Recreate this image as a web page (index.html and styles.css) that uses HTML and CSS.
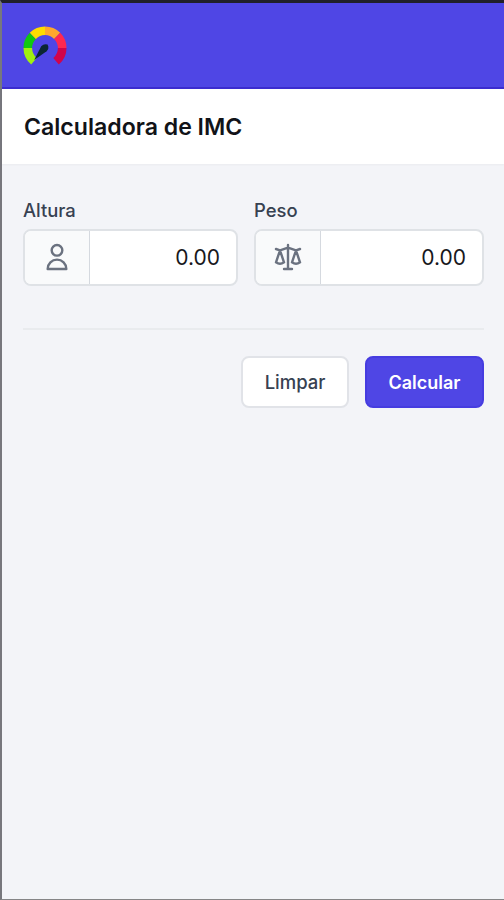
FILE: index.html
```html
<!DOCTYPE html>
<html lang="pt-BR">
<head>
    <meta charset="UTF-8">
    <meta name="viewport" content="width=device-width, initial-scale=1.0">
    <title>Calculadora de IMC</title>
    <link rel="stylesheet" href="styles.css">
</head>
<body>
    <div class="app">
        <nav class="navbar">
            <svg class="logo" viewBox="0 0 44 44" fill="none" stroke-width="8.6">
                <path stroke="#a0f010" d="M10.94 35.18A17.2 17.2 0 0 1 4.8 22"/>
                <path stroke="#10c810" d="M4.8 22A17.2 17.2 0 0 1 9.84 9.84"/>
                <path stroke="#ffdc00" d="M9.84 9.84A17.2 17.2 0 0 1 22 4.8"/>
                <path stroke="#ffa82c" d="M22 4.8A17.2 17.2 0 0 1 34.16 9.84"/>
                <path stroke="#ff2850" d="M34.16 9.84A17.2 17.2 0 0 1 39.2 22"/>
                <path stroke="#d0044c" d="M39.2 22A17.2 17.2 0 0 1 33.06 35.18"/>
                <path fill="#0b2633" d="M11.2 34L18.2 20.3Q20.8 17.4 24.6 18.6Q26.6 22.6 23.6 25.2Z"/>
            </svg>
        </nav>
        <header class="header">
            <h1>Calculadora de IMC</h1>
        </header>
        <main class="content">
            <form>
                <div class="fields">
                    <div class="field">
                        <label for="altura">Altura</label>
                        <div class="group">
                            <span class="addon">
                                <svg class="icon" viewBox="0 0 24 24">
                                    <path d="M16 7a4 4 0 11-8 0 4 4 0 018 0zM12 14a7 7 0 00-7 7h14a7 7 0 00-7-7z"/>
                                </svg>
                            </span>
                            <input type="text" id="altura" placeholder="0.00">
                        </div>
                    </div>
                    <div class="field">
                        <label for="peso">Peso</label>
                        <div class="group">
                            <span class="addon">
                                <svg class="icon" viewBox="0 0 24 24">
                                    <path d="M3 6l3 1m0 0l-3 9a5.002 5.002 0 006.001 0M6 7l3 9M6 7l6-2m6 2l3-1m-3 1l-3 9a5.002 5.002 0 006.001 0M18 7l3 9m-3-9l-6-2m0-2v2m0 16V5m0 16H9m3 0h3"/>
                                </svg>
                            </span>
                            <input type="text" id="peso" placeholder="0.00">
                        </div>
                    </div>
                </div>
                <div class="actions">
                    <button type="reset" class="btn">Limpar</button>
                    <button type="button" class="btn btn-primary">Calcular</button>
                </div>
            </form>
        </main>
    </div>
</body>
</html>
```

FILE: styles.css
```css
* {
    box-sizing: border-box;
}

body {
    margin: 0;
    font-family: Inter, "Liberation Sans", sans-serif;
    background-color: #f3f4f8;
}

.app {
    height: 100vh;
    border-top: 3px solid #20202a;
    border-left: 2px solid #77777d;
    border-bottom: 1px solid #858587;
}

.navbar {
    height: 86px;
    padding: 0 21px;
    display: flex;
    align-items: center;
    background-color: #4f46e5;
    border-bottom: 2px solid #3c2ccf;
}

.logo {
    width: 44px;
    height: 44px;
    margin-top: 6px;
}

.header {
    height: 75px;
    padding: 0 22px;
    display: flex;
    align-items: center;
    background-color: #fff;
    box-shadow: 0 1px 2px rgba(0, 0, 0, 0.04);
}

.header h1 {
    margin: 0;
    font-size: 23.1px;
    font-weight: 600;
    line-height: 28px;
    color: #111318;
}

.content {
    padding: 34px 20px 0 21px;
}

.fields {
    display: grid;
    grid-template-columns: 215px 230px;
    gap: 16px;
}

.field label {
    display: block;
    font-size: 18.4px;
    font-weight: 500;
    line-height: 24px;
    color: #374151;
}

.group {
    display: flex;
    height: 57px;
    margin-top: 7px;
    border: 2px solid #dfe2e6;
    border-radius: 8px;
    background-color: #fff;
    overflow: hidden;
}

.addon {
    width: 65px;
    flex-shrink: 0;
    display: flex;
    align-items: center;
    justify-content: center;
    background-color: #f9fafb;
    border-right: 1px solid #d5d9df;
}

.icon {
    width: 32px;
    height: 32px;
    margin-bottom: 2px;
    fill: none;
    stroke: #6b7280;
    stroke-width: 1.8;
    stroke-linecap: round;
    stroke-linejoin: round;
}

.group input {
    flex: 1;
    min-width: 0;
    padding: 0 16px;
    border: 0;
    outline: 0;
    background: none;
    font-family: inherit;
    font-size: 21px;
    text-align: right;
}

.group input::placeholder {
    color: #17181c;
}

.actions {
    display: flex;
    justify-content: flex-end;
    gap: 16px;
    margin-top: 42px;
    padding-top: 26px;
    border-top: 2px solid #e9ebee;
}

.btn {
    height: 52px;
    padding: 0 21.5px;
    border: 2px solid #e1e3e8;
    border-radius: 8px;
    background-color: #fff;
    font-family: inherit;
    font-size: 18.5px;
    font-weight: 500;
    color: #374151;
}

.btn-primary {
    border-color: #463ce0;
    background-color: #4f46e5;
    font-size: 18px;
    font-weight: 600;
    color: #fff;
}
```
